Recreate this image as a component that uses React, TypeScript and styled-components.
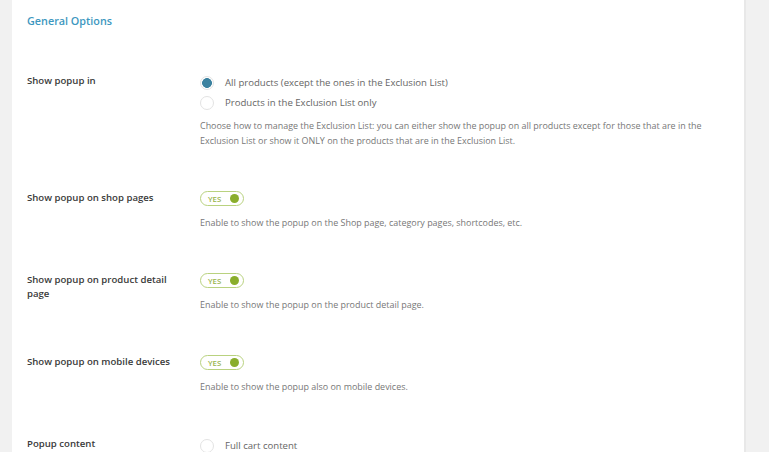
import React from "react";
import styled, { createGlobalStyle } from "styled-components";

const GlobalStyle = createGlobalStyle`
  html, body {
    margin: 0;
    padding: 0;
    background: #f1f1f1;
    font-family: "Open Sans", "Noto Sans", sans-serif;
  }
`;

const rows = [
  { label: "Show popup on shop pages", help: "Enable to show the popup on the Shop page, category pages, shortcodes, etc." },
  { label: "Show popup on product detail page", help: "Enable to show the popup on the product detail page." },
  { label: "Show popup on mobile devices", help: "Enable to show the popup also on mobile devices." },
];

const App = () => {
  return (
    <>
      <GlobalStyle />
      <Page>
        <Panel>
          <Title>General Options</Title>
          <Row>
            <Label>Show popup in</Label>
            <Field>
              <RadioList>
                <RadioItem>
                  <Radio checked />
                  All products (except the ones in the Exclusion List)
                </RadioItem>
                <RadioItem>
                  <Radio />
                  Products in the Exclusion List only
                </RadioItem>
              </RadioList>
              <Help $gap={8}>
                Choose how to manage the Exclusion List: you can either show the popup on all products except for those that are in the
                Exclusion List or show it ONLY on the products that are in the Exclusion List.
              </Help>
            </Field>
          </Row>
          {rows.map((r) => (
            <Row key={r.label}>
              <Label>{r.label}</Label>
              <Field>
                <Toggle>
                  <ToggleText>YES</ToggleText>
                  <ToggleDot />
                </Toggle>
                <Help $gap={9}>{r.help}</Help>
              </Field>
            </Row>
          ))}
          <Row>
            <Label>Popup content</Label>
            <Field>
              <RadioList>
                <RadioItem>
                  <Radio />
                  Full cart content
                </RadioItem>
              </RadioList>
            </Field>
          </Row>
        </Panel>
      </Page>
    </>
  );
};

const Page = styled.div`
  display: flex;
  height: 452px;
  overflow: hidden;
  padding-left: 12px;
`;

const Panel = styled.div`
  width: 734px;
  background: #fff;
  border-right: 2px solid #e8e8e8;
  padding: 12px 15px 0;
  box-sizing: border-box;
`;

const Title = styled.h2`
  margin: 0;
  font-size: 10.8px;
  font-weight: 600;
  color: #3d97c0;
  line-height: 17px;
`;

const Row = styled.div`
  display: grid;
  grid-template-columns: 173px 1fr;
  padding: 20px 0 23px;
  &:first-of-type {
    padding-top: 45px;
  }
`;

const Label = styled.div`
  font-size: 9.6px;
  font-weight: 600;
  color: #3a3a3a;
  line-height: 14px;
  padding-right: 20px;
`;

const Field = styled.div`
  display: flex;
  flex-direction: column;
  align-items: flex-start;
`;

const RadioList = styled.div`
  display: flex;
  flex-direction: column;
  gap: 6px;
  margin-top: 2px;
`;

const RadioItem = styled.label`
  display: flex;
  align-items: center;
  gap: 11px;
  font-size: 9.6px;
  color: #666;
  line-height: 14px;
`;

const Radio = styled.span<{ checked?: boolean }>`
  width: 14px;
  height: 14px;
  border-radius: 50%;
  box-sizing: border-box;
  border: 1px solid #e3e3e3;
  background: ${(p) => (p.checked ? "radial-gradient(circle, #3b819f 0 4.6px, #fff 5.2px)" : "#fff")};
  flex-shrink: 0;
`;

const Help = styled.p<{ $gap: number }>`
  margin: ${(p) => p.$gap}px 0 0;
  font-size: 8.95px;
  color: #777;
  line-height: 15px;
`;

const Toggle = styled.div`
  display: flex;
  align-items: center;
  justify-content: space-between;
  width: 44px;
  height: 15px;
  box-sizing: border-box;
  border: 1px solid #b9d27f;
  border-radius: 8px;
  padding: 0 4px 0 7px;
`;

const ToggleText = styled.span`
  font-size: 7.8px;
  font-weight: 600;
  color: #98b44a;
`;

const ToggleDot = styled.span`
  width: 9px;
  height: 9px;
  border-radius: 50%;
  background: #8aae2c;
`;

export default App;
